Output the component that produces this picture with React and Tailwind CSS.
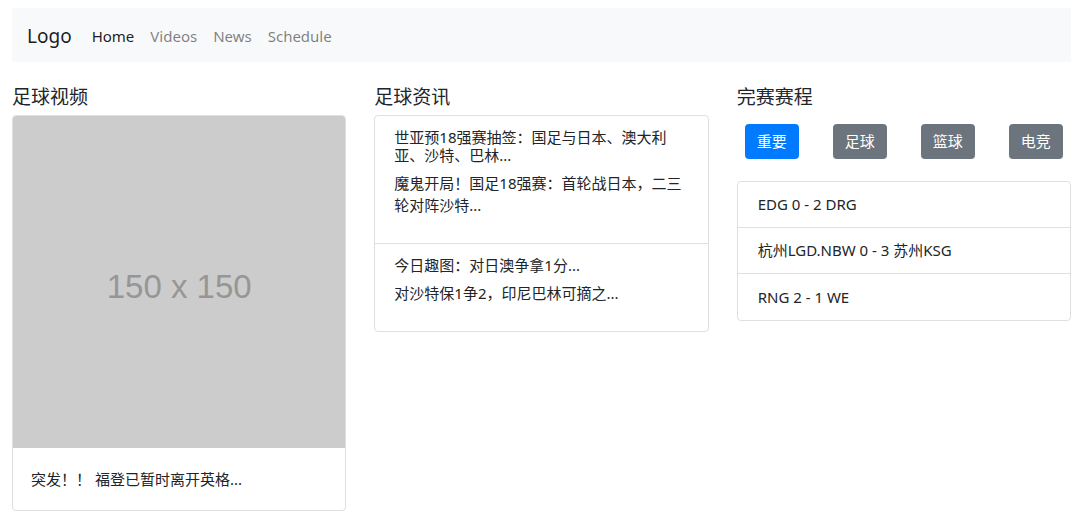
import React from "react";

export default function App() {
  return (
    <div className="min-h-[513px] bg-white pl-[12px] pr-[9px] pt-[8px] text-[#212529] font-['Noto_Sans','Noto_Sans_CJK_SC',sans-serif]">
      <nav className="flex h-[54px] items-center bg-[#f8f9fa] px-[15px]">
        <span className="mr-[12px] pt-[1px] text-[19px] leading-[30px] text-[rgba(0,0,0,0.9)]">Logo</span>
        <a className="px-[8px] pt-[1px] text-[15px] leading-[22px] text-[rgba(0,0,0,0.9)]">Home</a>
        <a className="px-[8px] pt-[1px] text-[15px] leading-[22px] text-[rgba(0,0,0,0.5)]">Videos</a>
        <a className="px-[8px] pt-[1px] text-[15px] leading-[22px] text-[rgba(0,0,0,0.5)]">News</a>
        <a className="px-[8px] pt-[1px] text-[15px] leading-[22px] text-[rgba(0,0,0,0.5)]">Schedule</a>
      </nav>

      <div className="mt-[23px] grid grid-cols-3 gap-[28px] items-start">
        {/* col 1 */}
        <div>
          <h5 className="mb-[6px] text-[19px] leading-[24px]">足球视频</h5>
          <div className="overflow-hidden rounded-[4px] border border-[#dfdfdf]">
            <div className="flex aspect-square w-full items-center justify-center bg-[#cccccc] pt-[10px]">
              <span className="font-['Liberation_Sans',sans-serif] text-[33px] text-[#969696]">150 x 150</span>
            </div>
            <div className="px-[18px] pt-[20px] pb-[20px]">
              <p className="text-[15px] leading-[22px]">突发！！ 福登已暂时离开英格...</p>
            </div>
          </div>
        </div>

        {/* col 2 */}
        <div>
          <h5 className="mb-[6px] text-[19px] leading-[24px]">足球资讯</h5>
          <div className="rounded-[4px] border border-[#dfdfdf]">
            <div className="border-b border-[#dfdfdf] px-[19px] pt-[12px] pb-[11px]">
              <h6 className="mb-[8px] text-[15px] leading-[18px]">世亚预18强赛抽签：国足与日本、澳大利亚、沙特、巴林...</h6>
              <p className="mb-[16px] text-[15px] leading-[22px]">魔鬼开局！国足18强赛：首轮战日本，二三轮对阵沙特...</p>
            </div>
            <div className="px-[19px] pt-[12px] pb-[11px]">
              <h6 className="mb-[8px] text-[15px] leading-[18px]">今日趣图：对日澳争拿1分...</h6>
              <p className="mb-[16px] text-[15px] leading-[22px]">对沙特保1争2，印尼巴林可摘之...</p>
            </div>
          </div>
        </div>

        {/* col 3 */}
        <div>
          <h5 className="mb-[6px] text-[19px] leading-[24px]">完赛赛程</h5>
          <div className="mt-[15px] ml-[8px] flex gap-[34px]">
            <button className="h-[35px] w-[54px] rounded-[4px] bg-[#007bff] text-[15px] text-white">重要</button>
            <button className="h-[35px] w-[54px] rounded-[4px] bg-[#6c757d] text-[15px] text-white">足球</button>
            <button className="h-[35px] w-[54px] rounded-[4px] bg-[#6c757d] text-[15px] text-white">篮球</button>
            <button className="h-[35px] w-[54px] rounded-[4px] bg-[#6c757d] text-[15px] text-white">电竞</button>
          </div>
          <ul className="mt-[22px] rounded-[4px] border border-[#dfdfdf]">
            <li className="border-b border-[#dfdfdf] px-[20px] py-[12px] text-[15px] leading-[21px]">EDG 0 - 2 DRG</li>
            <li className="border-b border-[#dfdfdf] px-[20px] py-[12px] text-[15px] leading-[21px]">杭州LGD.NBW 0 - 3 苏州KSG</li>
            <li className="px-[20px] py-[12px] text-[15px] leading-[22px]">RNG 2 - 1 WE</li>
          </ul>
        </div>
      </div>
    </div>
  );
}
